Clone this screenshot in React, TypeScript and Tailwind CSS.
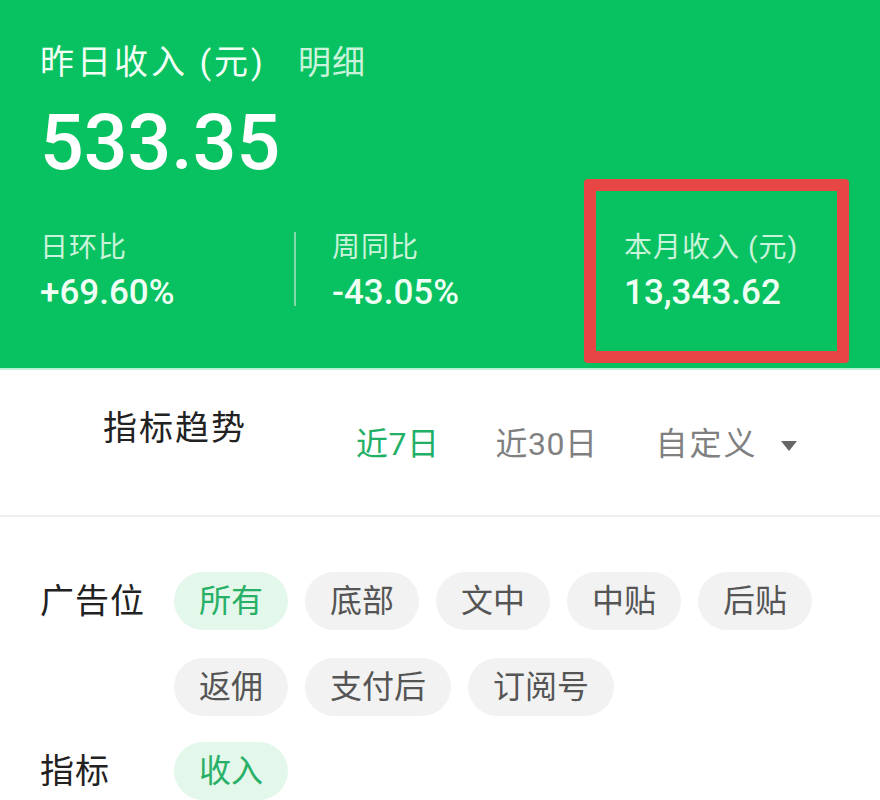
import React from "react";

const row1 = ["所有", "底部", "文中", "中贴", "后贴"];
const row2 = ["返佣", "支付后", "订阅号"];

function Chip({ label, active }: { label: string; active?: boolean }) {
  return (
    <div
      className={
        "h-[58px] px-[25px] rounded-full flex items-center text-[32px] leading-none " +
        (active ? "bg-[#e4f7eb] text-[#27b066]" : "bg-[#f2f2f2] text-[#555555]")
      }
    >
      {label}
    </div>
  );
}

export default function App() {
  return (
    <div className="w-[880px] h-[800px] overflow-hidden bg-white font-[Roboto,'Noto_Sans_CJK_SC',sans-serif]">
      {/* Green header */}
      <div className="relative bg-[#08c160] h-[370px] border-b-[2px] border-[#b8f2d2] pl-[40px] pt-[42px]">
        <div className="flex items-baseline">
          <span className="text-[34px] leading-[40px] tracking-[3px] text-[#f1fff6]">昨日收入 (元)</span>
          <span className="ml-[32px] text-[33px] leading-[40px] tracking-[1px] text-[#c9f3da]">明细</span>
        </div>
        <div className="mt-[21px] text-[77px] leading-[78px] font-medium text-white">533.35</div>
        <div className="mt-[50px] flex">
          <div className="w-[254px]">
            <div className="text-[28px] leading-[32px] tracking-[1px] text-[#c9f3da]">日环比</div>
            <div className="mt-[11px] text-[35px] leading-[36px] font-medium text-[#effff5]">+69.60%</div>
          </div>
          <div className="w-[2px] h-[74px] bg-[#7fdca8]" />
          <div className="w-[290px] pl-[36px]">
            <div className="text-[28px] leading-[32px] tracking-[1px] text-[#c9f3da]">周同比</div>
            <div className="mt-[11px] text-[35px] leading-[36px] font-medium text-[#effff5]">-43.05%</div>
          </div>
          <div className="w-[2px] h-[74px] bg-[#7fdca8]" />
          <div className="pl-[36px]">
            <div className="text-[28px] leading-[32px] tracking-[1px] text-[#c9f3da]">本月收入 (元)</div>
            <div className="mt-[11px] text-[35px] leading-[36px] font-medium text-[#effff5]">13,343.62</div>
          </div>
        </div>
        {/* red annotation box */}
        <div className="absolute left-[584px] top-[179px] w-[265px] h-[184px] border-[12px] border-[#e84545] rounded-[4px]" />
      </div>

      {/* Trend header */}
      <div className="h-[147px] border-b-[2px] border-[#efefef] flex pl-[103px]">
        <div className="pt-[38px] text-[34px] leading-[40px] tracking-[2px] text-[#222222]">指标趋势</div>
        <div className="pt-[56px] ml-[109px] flex items-start text-[32px] leading-[36px]">
          <span className="text-[#22b067] tracking-[0.5px]">近7日</span>
          <span className="ml-[56px] text-[#808080] tracking-[0.5px]">近30日</span>
          <span className="ml-[58px] text-[#808080] tracking-[2px]">自定义</span>
          <svg className="ml-[22px] mt-[14px]" width="18" height="12" viewBox="0 0 18 12">
            <path d="M1 1 L17 1 L9 11 Z" fill="#666666" />
          </svg>
        </div>
      </div>

      {/* Filters */}
      <div className="pt-[55px] pl-[40px]">
        <div className="flex">
          <div className="w-[134px] h-[58px] flex items-center text-[34px] leading-none tracking-[1px] text-[#222222]">广告位</div>
          <div className="flex flex-col gap-[28px]">
            <div className="flex gap-[17px]">
              {row1.map((l, i) => (
                <Chip key={l} label={l} active={i === 0} />
              ))}
            </div>
            <div className="flex gap-[17px]">
              {row2.map((l) => (
                <Chip key={l} label={l} />
              ))}
            </div>
          </div>
        </div>
        <div className="flex mt-[26px]">
          <div className="w-[134px] h-[58px] flex items-center text-[34px] leading-none tracking-[1px] text-[#222222]">指标</div>
          <Chip label="收入" active />
        </div>
      </div>
    </div>
  );
}
